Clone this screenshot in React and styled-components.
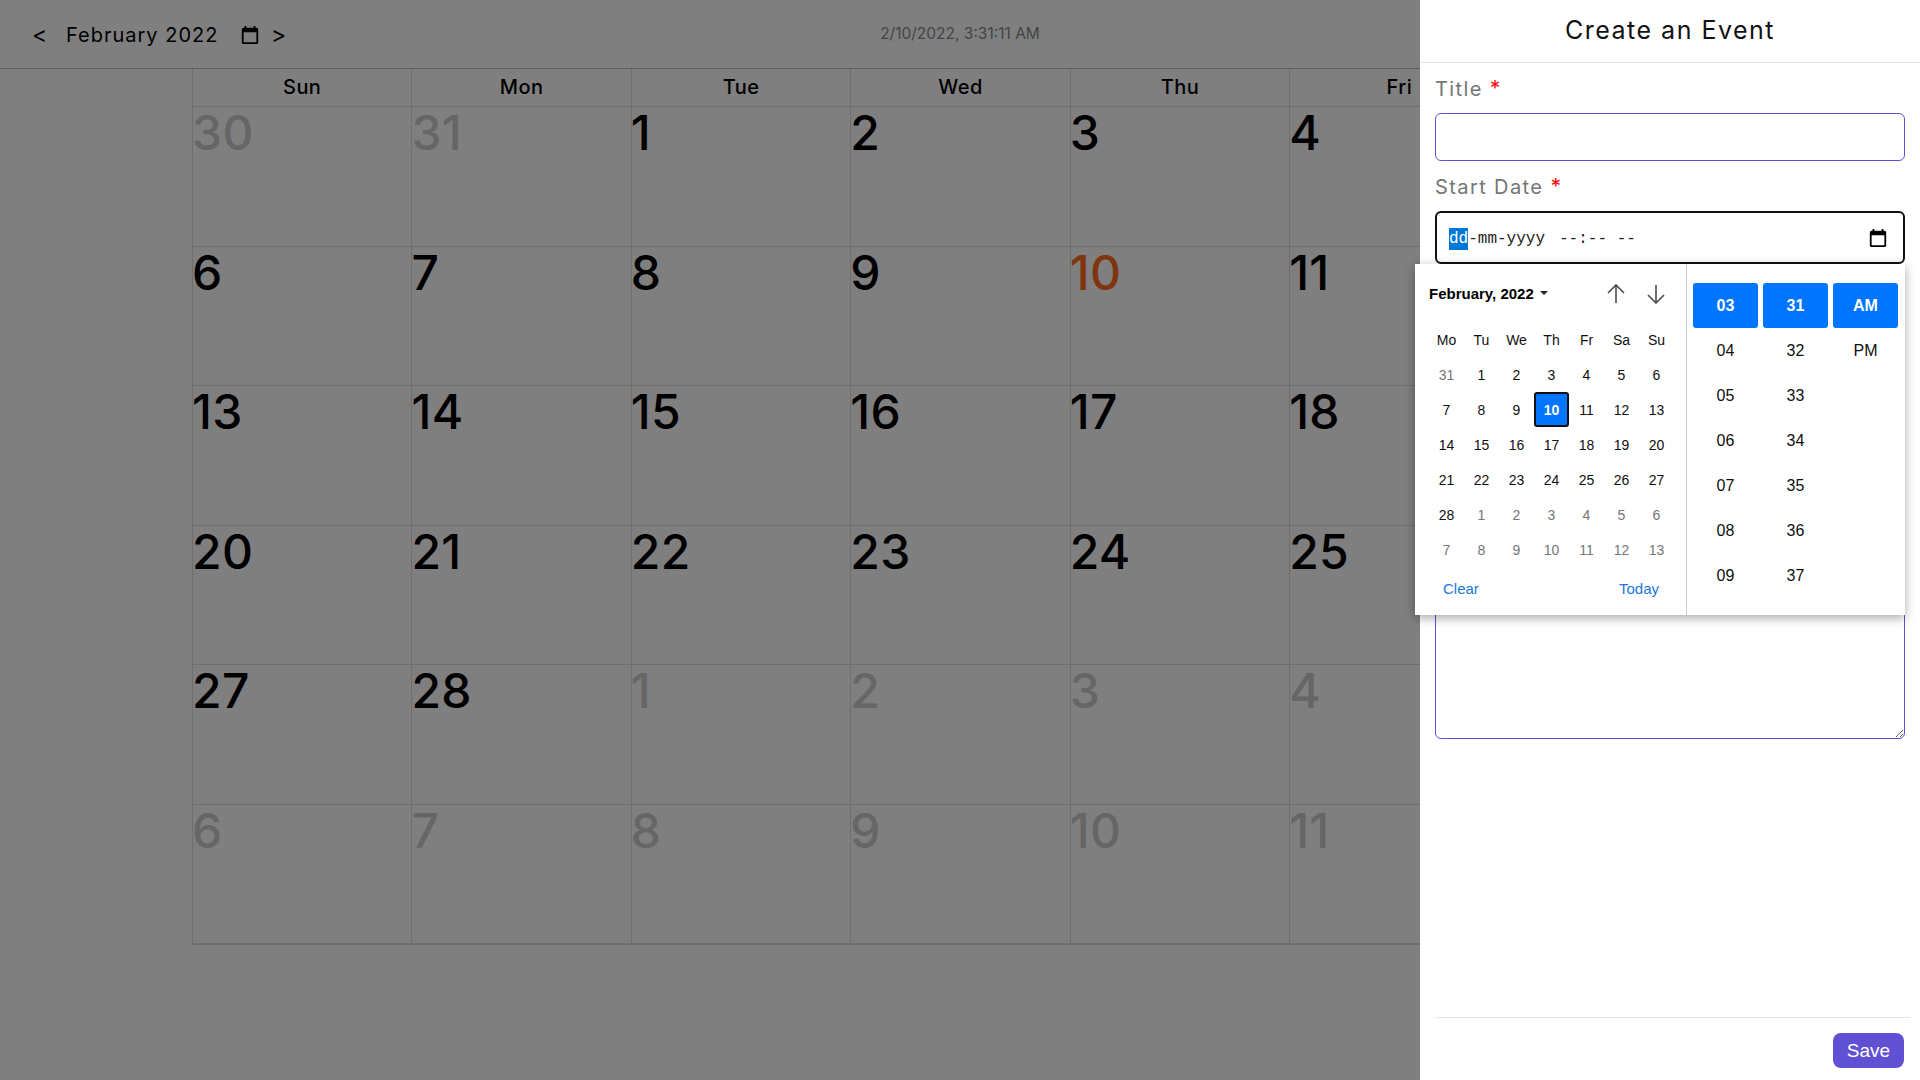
import React from 'react'
import styled, { createGlobalStyle } from 'styled-components'

const GlobalStyle = createGlobalStyle`
  * { box-sizing: border-box; }
  html, body { margin: 0; padding: 0; height: 100%; overflow: hidden; background: #fff; }
  body { font-family: Inter, "Liberation Sans", sans-serif; color: #000; }
`

// Saturday stays an empty column, the drawer sits on top of it
const WEEK_DAYS = ['Sun', 'Mon', 'Tue', 'Wed', 'Thu', 'Fri', '']
const PICKER_DAYS = ['Mo', 'Tu', 'We', 'Th', 'Fr', 'Sa', 'Su']

// prev/next month days are flagged with m so they get the muted colour
const d = (n) => ({ n, m: true })
const MONTH = [
  d(30), d(31), 1, 2, 3, 4, null,
  6, 7, 8, 9, 10, 11, null,
  13, 14, 15, 16, 17, 18, null,
  20, 21, 22, 23, 24, 25, null,
  27, 28, d(1), d(2), d(3), d(4), null,
  d(6), d(7), d(8), d(9), d(10), d(11), null,
]
const PICKER = [
  d(31), 1, 2, 3, 4, 5, 6,
  7, 8, 9, 10, 11, 12, 13,
  14, 15, 16, 17, 18, 19, 20,
  21, 22, 23, 24, 25, 26, 27,
  28, d(1), d(2), d(3), d(4), d(5), d(6),
  d(7), d(8), d(9), d(10), d(11), d(12), d(13),
]
const HOURS = ['03', '04', '05', '06', '07', '08', '09']
const MINUTES = ['31', '32', '33', '34', '35', '36', '37']
const MERIDIEM = ['AM', 'PM']

function CalendarIcon({ size = 20 }) {
  return (
    <svg width={size} height={size} viewBox="2 0 20 22" fill="currentColor">
      <path d="M19 3h-1V1h-2v2H8V1H6v2H5c-1.11 0-1.99.9-1.99 2L3 19c0 1.1.89 2 2 2h14c1.1 0 2-.9 2-2V5c0-1.1-.9-2-2-2zm0 16H5V8h14v11z" />
    </svg>
  )
}

function Arrow({ down }) {
  return (
    <svg width="20" height="20" viewBox="0 0 20 20" fill="none" stroke="#4d4d4d" strokeWidth="1.6">
      {down
        ? <path d="M10 1v18M2 11l8 8 8-8" />
        : <path d="M10 19V1M2 9l8-8 8 8" />}
    </svg>
  )
}

function TimeColumn({ values }) {
  return (
    <TimeCol>
      {values.map((v, i) => <TimeCell key={v} selected={i === 0 ? 1 : 0}>{v}</TimeCell>)}
    </TimeCol>
  )
}

export default function App() {
  return (
    <Page>
      <GlobalStyle />
      <TopBar>
        <MonthNav>
          <Chevron>&lt;</Chevron>
          <MonthName>February 2022</MonthName>
          <NavIcon><CalendarIcon /></NavIcon>
          <Chevron>&gt;</Chevron>
        </MonthNav>
        <Clock>2/10/2022, 3:31:11 AM</Clock>
      </TopBar>

      <Grid>
        {WEEK_DAYS.map((w, i) => <WeekDay key={i}>{w}</WeekDay>)}
        {MONTH.map((c, i) => {
          const muted = c !== null && typeof c === 'object'
          const n = muted ? c.n : c
          return (
            <Cell key={i}>
              <DayNumber muted={muted ? 1 : 0} today={!muted && n === 10 ? 1 : 0}>{n}</DayNumber>
            </Cell>
          )
        })}
      </Grid>

      <Overlay />

      <Drawer>
        <DrawerTitle>Create an Event</DrawerTitle>
        <Form>
          <Label>Title <Star>*</Star></Label>
          <TitleInput type="text" />
          <Label>Start Date <Star>*</Star></Label>
          <DateField>
            <DateText>
              <Selected>dd</Selected>-mm-yyyy<DateTime>--:-- --</DateTime>
            </DateText>
            <CalendarIcon />
            <Picker>
              <PickerLeft>
                <PickerHead>
                  <PickerMonth>February, 2022<Caret /></PickerMonth>
                  <PickerArrows>
                    <Arrow />
                    <Arrow down />
                  </PickerArrows>
                </PickerHead>
                <PickerGrid>
                  {PICKER_DAYS.map((p) => <PickerCell key={p}>{p}</PickerCell>)}
                  {PICKER.map((c, i) => {
                    const muted = typeof c === 'object'
                    const n = muted ? c.n : c
                    return (
                      <PickerCell key={i} muted={muted ? 1 : 0} active={!muted && n === 10 ? 1 : 0}>{n}</PickerCell>
                    )
                  })}
                </PickerGrid>
                <PickerFoot>
                  <PickerLink>Clear</PickerLink>
                  <PickerLink>Today</PickerLink>
                </PickerFoot>
              </PickerLeft>
              <PickerTime>
                <TimeColumn values={HOURS} />
                <TimeColumn values={MINUTES} />
                <TimeColumn values={MERIDIEM} />
              </PickerTime>
            </Picker>
          </DateField>
          <Notes />
        </Form>
        <Footer>
          <SaveButton>Save</SaveButton>
        </Footer>
      </Drawer>
    </Page>
  )
}

const Page = styled.div`
  position: relative;
  width: 1920px;
  height: 1080px;
  overflow: hidden;
  background: #fff;
`

const TopBar = styled.div`
  position: relative;
  height: 69px;
  padding: 2px 0 0 32px;
  display: flex;
  align-items: center;
  border-bottom: 1px solid #bbb;
`

const MonthNav = styled.div`
  display: flex;
  align-items: center;
  font-size: 20px;
  letter-spacing: 1px;
  color: #000;
`

const Chevron = styled.span`
  width: 15px;
  font-size: 23px;
  line-height: 24px;
  letter-spacing: 0;
`

const MonthName = styled.span`
  margin-left: 19px;
  width: 174px;
  white-space: nowrap;
`

const NavIcon = styled.span`
  display: flex;
  width: 31px;
`

const Clock = styled.div`
  position: absolute;
  left: 0;
  right: 0;
  top: 24px;
  text-align: center;
  font-size: 15.5px;
  color: #888;
`

const Grid = styled.div`
  width: 1536px;
  margin-left: 192px;
  display: grid;
  grid-template-columns: repeat(7, 1fr);
  grid-template-rows: 38px repeat(6, 139.5px);
  border-bottom: 1px solid #ddd;
`

const WeekDay = styled.div`
  padding-bottom: 2px;
  display: flex;
  align-items: center;
  justify-content: center;
  font-size: 20px;
  font-weight: 500;
  letter-spacing: 0.4px;
  border-left: 1px solid #ddd;
  border-bottom: 1px solid #ddd;
`

const Cell = styled.div`
  border-left: 1px solid #ddd;
  border-bottom: 1px solid #ddd;
`

const DayNumber = styled.div`
  margin-left: -1px;
  font-size: 48px;
  line-height: 52px;
  font-weight: 500;
  letter-spacing: 0.3px;
  color: ${(p) => (p.today ? '#ff6a1a' : p.muted ? '#ccc' : '#000')};
`

const Overlay = styled.div`
  position: absolute;
  inset: 0;
  background: rgba(0, 0, 0, 0.5);
`

const Drawer = styled.div`
  position: absolute;
  top: 0;
  right: 0;
  bottom: 0;
  width: 500px;
  background: #fff;
  display: flex;
  flex-direction: column;
`

const DrawerTitle = styled.div`
  height: 63px;
  line-height: 61px;
  text-align: center;
  font-size: 25px;
  letter-spacing: 1.5px;
  color: #111;
  border-bottom: 1px solid #e5e5e5;
`

const Form = styled.div`
  flex: 1;
  padding: 0 15px;
  display: flex;
  flex-direction: column;
`

const Label = styled.div`
  height: 24px;
  line-height: 24px;
  margin: 14px 0 12px;
  font-size: 20px;
  letter-spacing: 1.4px;
  color: #757575;
`

const Star = styled.span`
  color: #f00;
  font-size: 21px;
`

const TitleInput = styled.input`
  display: block;
  width: 100%;
  height: 48px;
  border: 1px solid #6050d8;
  border-radius: 6px;
  outline: none;
  background: #fff;
`

const DateField = styled.div`
  position: relative;
  height: 53px;
  padding: 0 15px 0 12px;
  display: flex;
  align-items: center;
  justify-content: space-between;
  border: 2px solid #111;
  border-radius: 6px;
`

const DateText = styled.div`
  padding-top: 2px;
  font-family: "Liberation Mono", monospace;
  font-size: 16px;
  color: #222;
  white-space: nowrap;
`

const Selected = styled.span`
  background: #0078d7;
  color: #fff;
  padding: 2px 0;
`

const DateTime = styled.span`
  margin-left: 14px;
`

const Picker = styled.div`
  position: absolute;
  left: -22px;
  top: 51px;
  width: 490px;
  height: 351px;
  z-index: 2;
  display: flex;
  background: #fff;
  font-family: "Liberation Sans", Arial, sans-serif;
  box-shadow: 0 3px 10px rgba(0, 0, 0, 0.35);
`

const PickerLeft = styled.div`
  width: 272px;
  border-right: 1px solid #ccc;
  padding: 19px 0 0 14px;
`

const PickerHead = styled.div`
  height: 20px;
  display: flex;
  align-items: center;
  justify-content: space-between;
  padding-right: 20px;
`

const PickerMonth = styled.div`
  font-size: 15px;
  font-weight: 700;
  color: #000;
  display: flex;
  align-items: center;
`

const Caret = styled.span`
  margin-left: 6px;
  width: 0;
  height: 0;
  border-left: 4px solid transparent;
  border-right: 4px solid transparent;
  border-top: 4px solid #222;
`

const PickerArrows = styled.div`
  display: flex;
  gap: 20px;
  margin-top: 2px;
`

const PickerGrid = styled.div`
  margin-top: 19px;
  display: grid;
  grid-template-columns: repeat(7, 35px);
  grid-auto-rows: 35px;
`

const PickerCell = styled.div`
  display: flex;
  align-items: center;
  justify-content: center;
  font-size: 14px;
  border-radius: 3px;
  color: ${(p) => (p.active ? '#fff' : p.muted ? '#767676' : '#101010')};
  font-weight: ${(p) => (p.active ? 700 : 400)};
  background: ${(p) => (p.active ? '#0075ff' : 'transparent')};
  border: ${(p) => (p.active ? '2px solid #101010' : 'none')};
`

const PickerFoot = styled.div`
  margin-top: 4px;
  height: 35px;
  display: flex;
  align-items: center;
  justify-content: space-between;
  padding: 0 27px 0 14px;
`

const PickerLink = styled.span`
  font-size: 15px;
  color: #1a78d8;
`

const PickerTime = styled.div`
  flex: 1;
  padding: 19px 0 0 6px;
  display: flex;
  gap: 5px;
`

const TimeCol = styled.div`
  width: 65px;
  display: flex;
  flex-direction: column;
`

const TimeCell = styled.div`
  height: 45px;
  display: flex;
  align-items: center;
  justify-content: center;
  font-size: 16px;
  border-radius: 3px;
  color: ${(p) => (p.selected ? '#fff' : '#101010')};
  font-weight: ${(p) => (p.selected ? 700 : 400)};
  background: ${(p) => (p.selected ? '#0075ff' : 'transparent')};
`

const Notes = styled.textarea`
  display: block;
  width: 100%;
  margin-top: 13px;
  height: 462px;
  border: 1px solid #6050d8;
  border-radius: 6px;
  outline: none;
`

const Footer = styled.div`
  margin: 0 10px 12px 15px;
  padding: 15px 6px 0 0;
  display: flex;
  justify-content: flex-end;
  border-top: 1px solid #e5e5e5;
`

const SaveButton = styled.button`
  width: 71px;
  height: 35px;
  padding: 0;
  border: none;
  border-radius: 8px;
  background: #6050d4;
  color: #fff;
  font-family: "Liberation Sans", Arial, sans-serif;
  font-size: 19px;
`
